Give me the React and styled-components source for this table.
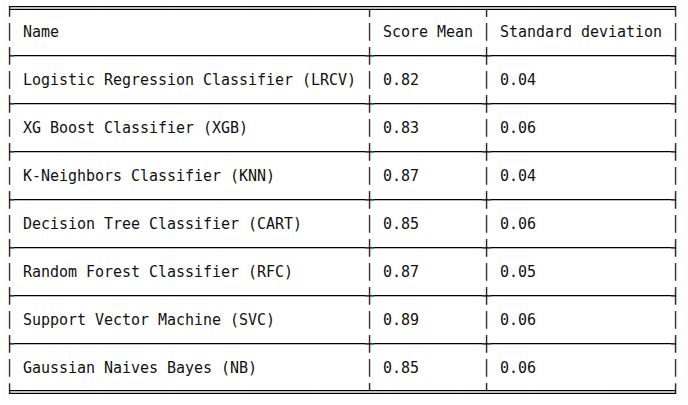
import React from "react";
import styled, { createGlobalStyle } from "styled-components";

const GlobalStyle = createGlobalStyle`
  html, body {
    margin: 0;
    padding: 0;
    background: #ffffff;
  }
`;

const Output = styled.pre`
  margin: -4px 0 0 0;
  padding: 0 0 0 5px;
  font-family: "DejaVu Sans Mono", "Liberation Mono", monospace;
  font-size: 15px;
  letter-spacing: -0.03px;
  line-height: 24px;
  color: #111111;
  background: #ffffff;
  white-space: pre;
`;

const Line = styled.div`
  height: 24px;
  color: ${(p) => (p.$rule ? "#000000" : "#111111")};
`;

const columns = ["Name", "Score Mean", "Standard deviation"];

const rows = [
  ["Logistic Regression Classifier (LRCV)", "0.82", "0.04"],
  ["XG Boost Classifier (XGB)", "0.83", "0.06"],
  ["K-Neighbors Classifier (KNN)", "0.87", "0.04"],
  ["Decision Tree Classifier (CART)", "0.85", "0.06"],
  ["Random Forest Classifier (RFC)", "0.87", "0.05"],
  ["Support Vector Machine (SVC)", "0.89", "0.06"],
  ["Gaussian Naives Bayes (NB)", "0.85", "0.06"],
];

const widths = columns.map((c, i) =>
  Math.max(c.length, ...rows.map((r) => r[i].length))
);

const rule = (left, fill, mid, right) =>
  left + widths.map((w) => fill.repeat(w + 2)).join(mid) + right;

const cells = (values) =>
  "│" + values.map((v, i) => " " + v.padEnd(widths[i], " ") + " ").join("│") + "│";

export default function App() {
  const lines = [];
  lines.push({ text: rule("╒", "═", "╤", "╕"), rule: true });
  lines.push({ text: cells(columns) });
  rows.forEach((r) => {
    lines.push({ text: rule("├", "─", "┼", "┤"), rule: true });
    lines.push({ text: cells(r) });
  });
  lines.push({ text: rule("╘", "═", "╧", "╛"), rule: true });

  return (
    <>
      <GlobalStyle />
      <Output>
        {lines.map((l, i) => (
          <Line key={i} $rule={l.rule}>
            {l.text}
          </Line>
        ))}
      </Output>
    </>
  );
}
